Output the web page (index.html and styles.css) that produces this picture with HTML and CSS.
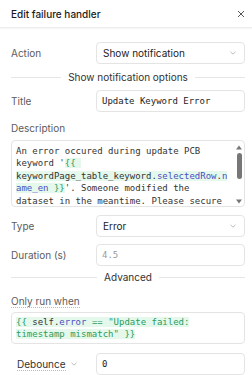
FILE: index.html
```html
<!DOCTYPE html>
<html lang="en">
<head>
    <meta charset="UTF-8">
    <meta name="viewport" content="width=device-width, initial-scale=1.0">
    <title>Edit failure handler</title>
    <link rel="stylesheet" href="styles.css">
</head>
<body>
    <div class="header">
        <span class="header-title">Edit failure handler</span>
        <svg class="close" width="8" height="8" viewBox="0 0 8 8"><path d="M1 1L7 7M7 1L1 7" stroke="#555" stroke-width="1"/></svg>
    </div>

    <div class="content">
        <div class="row row-action">
            <label class="label">Action</label>
            <div class="select">
                <span>Show notification</span>
                <svg class="chevron" width="6" height="4" viewBox="0 0 6 4"><path d="M0.5 0.8L3 3.2L5.5 0.8" fill="none" stroke="#aaa" stroke-width="0.8"/></svg>
            </div>
        </div>

        <div class="divider divider-options"><span>Show notification options</span></div>

        <div class="row row-title">
            <label class="label">Title</label>
            <div class="input mono">Update Keyword Error</div>
        </div>

        <label class="label block-label desc-label">Description</label>
        <div class="textarea mono">
            <div class="textarea-text">
                <div class="line">An error occured during update PCB</div>
                <div class="line">keyword '<span class="tpl"><span class="g">{{</span> </span></div>
                <div class="line"><span class="tpl">keywordPage_table_keyword.<span class="b">selectedRow</span>.<span class="b">n</span></span></div>
                <div class="line"><span class="tpl"><span class="b">ame_en</span> <span class="g">}}</span></span>'. Someone modified the</div>
                <div class="line">dataset in the meantime. Please secure</div>
            </div>
            <div class="scrollbar">
                <svg width="6" height="5" viewBox="0 0 6 5"><path d="M0 4.5L3 0.5L6 4.5Z" fill="#777"/></svg>
                <div class="thumb"></div>
                <svg class="arrow-down" width="6" height="5" viewBox="0 0 6 5"><path d="M0 0.5L3 4.5L6 0.5Z" fill="#777"/></svg>
            </div>
        </div>

        <div class="row row-type">
            <label class="label">Type</label>
            <div class="select">
                <span>Error</span>
                <svg class="chevron" width="6" height="4" viewBox="0 0 6 4"><path d="M0.5 0.8L3 3.2L5.5 0.8" fill="none" stroke="#aaa" stroke-width="0.8"/></svg>
            </div>
        </div>

        <div class="row row-duration">
            <label class="label">Duration (s)</label>
            <div class="input mono placeholder">4.5</div>
        </div>

        <div class="divider divider-advanced"><span>Advanced</span></div>

        <label class="label block-label dotted run-label">Only run when</label>
        <div class="code mono">
            <div class="line"><span class="tpl"><span class="g">{{</span> self.<span class="b">error</span> <span class="g">==</span> <span class="g">"Update failed:</span></span></div>
            <div class="line"><span class="tpl"><span class="g">timestamp mismatch"</span> <span class="g">}}</span></span></div>
        </div>

        <div class="row row-debounce">
            <label class="label debounce-label"><span class="dotted">Debounce</span>
                <svg class="chevron" width="6" height="4" viewBox="0 0 6 4"><path d="M0.5 0.8L3 3.2L5.5 0.8" fill="none" stroke="#aaa" stroke-width="0.8"/></svg>
            </label>
            <div class="input mono">0</div>
        </div>
    </div>
</body>
</html>
```

FILE: styles.css
```css
body {
    margin: 0;
    font-family: Inter, "Noto Sans", sans-serif;
    font-size: 10px;
    color: #222;
    background-color: #fff;
    overflow: hidden;
}
.mono {
    font-family: "DejaVu Sans Mono", "Liberation Mono", monospace;
    font-size: 9px;
}
.header {
    height: 27px;
    display: flex;
    align-items: center;
    justify-content: space-between;
    padding: 0 7px 0 11px;
    border-bottom: 1px solid #ededed;
    box-shadow: 0 1px 1px rgba(0, 0, 0, 0.03);
}
.header-title {
    font-size: 10px;
    font-weight: 500;
    color: #1c1c1c;
}
.content {
    padding: 0 7px 0 11px;
}
.row {
    display: grid;
    grid-template-columns: 85px 1fr;
    align-items: center;
}
.label {
    color: #5c5c5c;
    font-size: 10px;
}
.select, .input {
    height: 20px;
    border: 1px solid #e4e4e4;
    border-radius: 4px;
    display: flex;
    align-items: center;
    justify-content: space-between;
    padding: 0 8px 0 6px;
    color: #222;
}
.input {
    padding-left: 5px;
}
.placeholder {
    color: #9a9a9a;
}
.row-action {
    margin-top: 14px;
}
.divider {
    display: flex;
    align-items: center;
    gap: 7px;
    height: 14px;
    color: #333;
    font-size: 10px;
}
.divider::before, .divider::after {
    content: "";
    flex: 1;
    height: 1px;
    background-color: #e6e6e6;
}
.divider-options {
    margin-top: 6px;
}
.row-title {
    margin-top: 6px;
}
.block-label {
    display: block;
    line-height: 14px;
}
.desc-label {
    margin-top: 9px;
}
.textarea {
    margin-top: 5px;
    height: 65px;
    border: 1px solid #e4e4e4;
    border-radius: 4px;
    display: flex;
    overflow: hidden;
}
.textarea-text {
    flex: 1;
    padding: 4px 0 0 4px;
    line-height: 12.4px;
    color: #333;
}
.line {
    white-space: pre;
}
.tpl {
    background-color: #e4f8ec;
}
.g {
    color: #2b9c60;
}
.b {
    color: #4a4ec4;
}
.scrollbar {
    width: 10px;
    display: flex;
    flex-direction: column;
    align-items: center;
    padding-top: 4px;
}
.thumb {
    width: 5px;
    height: 26px;
    margin-top: 3px;
    border-radius: 3px;
    background-color: #777;
}
.arrow-down {
    margin-top: auto;
    margin-bottom: 2px;
}
.row-type {
    margin-top: 8px;
}
.row-duration {
    margin-top: 7px;
}
.divider-advanced {
    margin-top: 4px;
}
.run-label {
    margin-top: 11px;
    width: max-content;
}
.dotted {
    border-bottom: 1px dotted #bbb;
    line-height: 12px;
}
.code {
    margin-top: 4px;
    height: 32px;
    box-sizing: border-box;
    border: 1px solid #e4e4e4;
    border-radius: 4px;
    padding: 3px 0 0 4px;
    line-height: 12.4px;
    color: #333;
}
.row-debounce {
    margin-top: 9px;
}
.debounce-label {
    display: flex;
    align-items: center;
    gap: 5px;
    padding-left: 6px;
    color: #333;
}
```
